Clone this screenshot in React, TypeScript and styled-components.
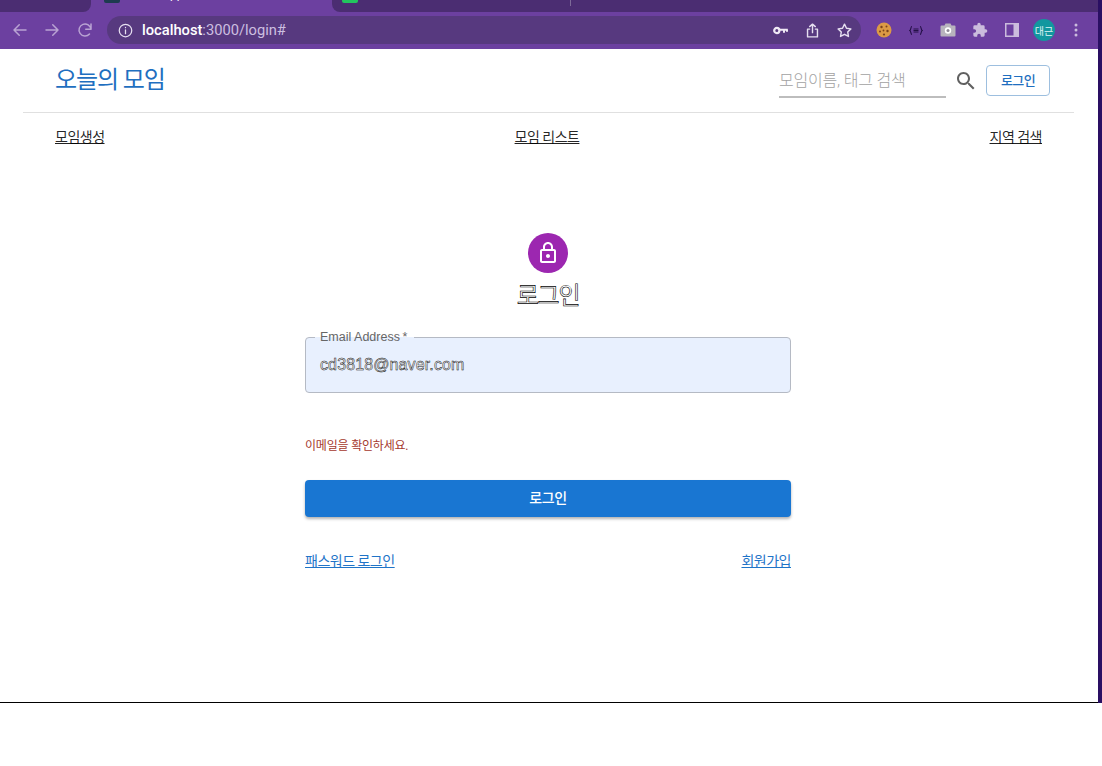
import type { ReactNode } from 'react'
import styled, { createGlobalStyle } from 'styled-components'

const GlobalStyle = createGlobalStyle`
  html, body {
    background: #fff;
    margin: 0;
    padding: 0;
  }
  body {
    font-family: Roboto, "Noto Sans CJK KR", sans-serif;
    height: 766px;
    overflow: hidden;
  }
`

const Screen = styled.div`
  background: #2a0f63;
  display: flex;
  flex-direction: column;
  height: 703px;
  padding-right: 4px;
  width: 1098px;
`

const TabStrip = styled.div`
  background: #6c40a0;
  display: flex;
  flex-shrink: 0;
  height: 12px;
  overflow: hidden;
`

const LeftTab = styled.div`
  background: #4b2d72;
  border-bottom-right-radius: 8px;
  flex-shrink: 0;
  width: 91px;
`

const ActiveTab = styled.div`
  display: flex;
  flex-shrink: 0;
  gap: 8px;
  padding-left: 13px;
  width: 228px;
`

const RightTab = styled.div`
  background: #4b2d72;
  border-bottom-left-radius: 8px;
  display: flex;
  flex: 1;
  padding-left: 10px;
`

const Favicon = styled.div<{ $color: string }>`
  background: ${(p) => p.$color};
  border-radius: 0 0 2px 2px;
  flex-shrink: 0;
  height: 3px;
  width: 16px;
`

const TabTitle = styled.div`
  color: #fff;
  font-family: "Liberation Sans", sans-serif;
  font-size: 12px;
  line-height: 14px;
  margin-top: -13px;
`

const TabDivider = styled.div`
  background: #7d6a98;
  height: 6px;
  margin-left: 212px;
  width: 1px;
`

const Toolbar = styled.div`
  align-items: center;
  background: #6c40a0;
  box-sizing: border-box;
  display: flex;
  flex-shrink: 0;
  height: 37px;
  padding: 0 0 1px 10px;
`

const NavButton = styled.div`
  align-items: center;
  color: #b9a3d3;
  display: flex;
  height: 20px;
  justify-content: center;
  margin-right: 12.33px;
  width: 20px;
`

const Omnibox = styled.div`
  align-items: center;
  background: #57397f;
  border-radius: 14px;
  box-sizing: border-box;
  color: #e6dff0;
  display: flex;
  height: 28px;
  padding: 0 6px 0 11px;
  width: 754px;
`

const Url = styled.div`
  color: #cdbfe0;
  flex: 1;
  font-size: 14.7px;
  margin-left: 9px;

  b {
    color: #fff;
    font-weight: 500;
  }
`

const ToolIcon = styled.div`
  align-items: center;
  display: flex;
  height: 20px;
  justify-content: center;
  margin-left: 12px;
  width: 20px;
`

const ExtIcons = styled.div`
  align-items: center;
  display: flex;
  gap: 12px;
  margin-left: 13px;
`

const ExtSlot = styled.div`
  align-items: center;
  display: flex;
  height: 22px;
  justify-content: center;
  width: 20px;
`

const Avatar = styled.div`
  align-items: center;
  background: #12979f;
  border-radius: 50%;
  color: #dff4f5;
  display: flex;
  flex-shrink: 0;
  font-size: 10px;
  height: 22px;
  justify-content: center;
  width: 22px;
`

const Page = styled.div`
  background: #fff;
  border-bottom: 1px solid #000;
  display: flex;
  flex: 1;
  flex-direction: column;
  padding: 0 24px 0 23px;
`

const Header = styled.header`
  align-items: center;
  border-bottom: 1px solid #e0e0e0;
  display: flex;
  flex-shrink: 0;
  height: 63px;
  justify-content: space-between;
  padding: 0 24px 0 32px;
`

const Brand = styled.h1`
  color: #1f6fc0;
  font-size: 24px;
  font-weight: 400;
  letter-spacing: -1.1px;
  margin: 0 0 6px;
`

const HeaderRight = styled.div`
  align-items: center;
  display: flex;
`

const SearchInput = styled.div`
  border-bottom: 2px solid #bdbdbd;
  color: #a2a2a2;
  font-size: 16px;
  font-weight: 300;
  height: 32px;
  letter-spacing: -0.2px;
  line-height: 33px;
  width: 167px;
`

const SearchButton = styled.div`
  align-items: center;
  color: #616161;
  display: flex;
  justify-content: center;
  margin-left: 8px;
  width: 24px;
`

const OutlineButton = styled.div`
  align-items: center;
  border: 1px solid #9dbfdf;
  border-radius: 4px;
  box-sizing: border-box;
  color: #1f6fc0;
  display: flex;
  font-size: 13px;
  font-weight: 500;
  height: 31px;
  justify-content: center;
  letter-spacing: -0.6px;
  margin-left: 8px;
  padding-bottom: 3px;
  width: 64px;
`

const SubNav = styled.nav`
  display: flex;
  flex-shrink: 0;
  justify-content: space-between;
  padding: 14px 32px 0;
`

const SubNavLink = styled.a`
  color: rgba(0, 0, 0, 0.87);
  font-size: 14px;
  letter-spacing: -0.5px;
  line-height: 20px;
  text-decoration: underline;
`

const Form = styled.main`
  align-items: center;
  display: flex;
  flex-direction: column;
  margin-left: 282px;
  padding-top: 86px;
  width: 486px;
`

const LockBadge = styled.div`
  align-items: center;
  background: #9c27b0;
  border-radius: 50%;
  color: #fff;
  display: flex;
  height: 40px;
  justify-content: center;
  width: 40px;
`

const FormTitle = styled.h2`
  color: #fff;
  font-size: 24px;
  font-weight: 400;
  letter-spacing: -1.2px;
  line-height: 28px;
  margin: 9px 0 0;
  -webkit-text-stroke: 0.6px #000;
`

const Field = styled.div`
  background: #e8f0fe;
  border: 1px solid #b5bac4;
  border-radius: 4px;
  box-sizing: border-box;
  color: #fff;
  font-family: "Liberation Sans", sans-serif;
  font-size: 16px;
  height: 56px;
  letter-spacing: 0.12px;
  line-height: 54px;
  margin-top: 27px;
  padding-left: 14px;
  position: relative;
  -webkit-text-stroke: 0.5px #111;
  width: 100%;
`

const FieldLabel = styled.label`
  background: linear-gradient(#fff 50%, #e8f0fe 50%);
  color: #666;
  font-family: "Liberation Sans", sans-serif;
  font-size: 12.5px;
  left: 9px;
  letter-spacing: 0;
  line-height: 12px;
  padding: 0 7px 0 5px;
  position: absolute;
  top: -7px;
  -webkit-text-stroke: 0;
`

const ErrorText = styled.p`
  align-self: flex-start;
  color: #a5382d;
  font-size: 12px;
  letter-spacing: -0.2px;
  line-height: 16px;
  margin: 45px 0 0;
`

const SubmitButton = styled.button`
  background: #1976d2;
  border: 0;
  border-radius: 4px;
  box-shadow: 0 2px 3px rgba(0, 0, 0, 0.3);
  color: #fff;
  font-family: inherit;
  font-size: 14px;
  font-weight: 500;
  height: 37px;
  letter-spacing: -0.4px;
  margin-top: 26px;
  padding: 0 0 3px;
  width: 100%;
`

const FormLinks = styled.div`
  display: flex;
  justify-content: space-between;
  margin-top: 34px;
  width: 100%;
`

const FormLink = styled.a`
  color: #1f74c8;
  font-size: 14px;
  letter-spacing: -0.5px;
  line-height: 20px;
  text-decoration: underline;
`

function Stroke ({ size = 18, children }: { size?: number; children: ReactNode }) {
  return (
    <svg width={size} height={size} viewBox="0 0 24 24" fill="none" stroke="currentColor" strokeWidth="2" strokeLinecap="round" strokeLinejoin="round">
      {children}
    </svg>
  )
}

function KeyIcon () {
  return (
    <svg width="15" height="9" viewBox="0 0 15 9" fill="none" stroke="#efe9f5">
      <circle cx="3.800" cy="4.500" r="2.600" strokeWidth="2.200" />
      <path d="M6.500 3.800h8.300M11 3.800v3M14 3.800v2" strokeWidth="2" />
    </svg>
  )
}

function Cookie () {
  return (
    <svg width="16" height="16" viewBox="0 0 16 16">
      <circle cx="8" cy="8" r="7.500" fill="#dc9a45" />
      <circle cx="5.500" cy="5" r="1.200" fill="#7a431c" />
      <circle cx="10.500" cy="4.500" r="1" fill="#7a431c" />
      <circle cx="4" cy="9.500" r="1" fill="#7a431c" />
      <circle cx="11.500" cy="9" r="1.200" fill="#7a431c" />
      <circle cx="7.500" cy="8.500" r="0.900" fill="#7a431c" />
      <circle cx="8" cy="12.500" r="1.100" fill="#7a431c" />
    </svg>
  )
}

function Braces () {
  return (
    <svg width="14" height="9" viewBox="0 0 14 9" fill="none" stroke="#241046" strokeWidth="1.100">
      <path d="M3 .5C1.500.5 2.200 4 .7 4.500 2.200 5 1.500 8.500 3 8.500M11 .5c1.500 0 .8 3.500 2.300 4-1.500.5-.8 4-2.300 4M4.500 3h5M4.500 4.500h5M4.500 6h5" />
    </svg>
  )
}

function Camera () {
  return (
    <svg width="16" height="14" viewBox="0 0 16 14">
      <path d="M1.500 2.500h3L5.500.5h5l1 2h3a1 1 0 0 1 1 1v9a1 1 0 0 1-1 1h-13a1 1 0 0 1-1-1v-9a1 1 0 0 1 1-1z" fill="#b8b4bd" />
      <circle cx="8" cy="7.500" r="3.200" fill="#fff" />
      <circle cx="8" cy="7.500" r="1.500" fill="#8f8a96" />
    </svg>
  )
}

function Puzzle () {
  return (
    <svg width="16" height="16" viewBox="0 0 24 24" fill="#cbbcdd">
      <path d="M20.500 11H19V7a2 2 0 0 0-2-2h-4V3.500a2.500 2.500 0 0 0-5 0V5H4a2 2 0 0 0-2 2v3.800h1.500a2.700 2.700 0 0 1 0 5.400H2V20a2 2 0 0 0 2 2h3.800v-1.500a2.700 2.700 0 0 1 5.400 0V22H17a2 2 0 0 0 2-2v-4h1.500a2.500 2.500 0 0 0 0-5z" />
    </svg>
  )
}

function SidePanel () {
  return (
    <svg width="14" height="14" viewBox="0 0 14 14">
      <rect x="0" y="0" width="14" height="14" fill="#cbbcdd" />
      <rect x="1.500" y="1.500" width="7" height="11" fill="#6c40a0" />
    </svg>
  )
}

function Kebab () {
  return (
    <svg width="4" height="14" viewBox="0 0 4 14" fill="#cbbcdd">
      <circle cx="2" cy="2" r="1.500" />
      <circle cx="2" cy="7" r="1.500" />
      <circle cx="2" cy="12" r="1.500" />
    </svg>
  )
}

export default function App () {
  return (
    <>
      <GlobalStyle />
      <Screen>
        <TabStrip>
          <LeftTab />
          <ActiveTab>
            <Favicon $color="#1d3b4f" />
            <TabTitle>React App</TabTitle>
          </ActiveTab>
          <RightTab>
            <Favicon $color="#22c55e" />
            <TabDivider />
          </RightTab>
        </TabStrip>
        <Toolbar>
          <NavButton>
            <Stroke><path d="M20 12H4M11 5l-7 7 7 7" /></Stroke>
          </NavButton>
          <NavButton>
            <Stroke><path d="M4 12h16M13 5l7 7-7 7" /></Stroke>
          </NavButton>
          <NavButton>
            <Stroke><path d="M20 11a8 8 0 1 0-2 6.300M20 4v7h-7" /></Stroke>
          </NavButton>
          <Omnibox>
            <Stroke size={15}><circle cx="12" cy="12" r="10" /><path d="M12 11v6M12 7v.5" /></Stroke>
            <Url><b>localhost</b>:3000/login#</Url>
            <ToolIcon><KeyIcon /></ToolIcon>
            <ToolIcon>
              <Stroke size={17}><path d="M12 15V3M8 6.500 12 3l4 3.500M8 10H5v11h14V10h-3" /></Stroke>
            </ToolIcon>
            <ToolIcon>
              <Stroke size={17}><path d="m12 3 2.800 5.800 6.200.9-4.500 4.400 1.100 6.300L12 17.400 6.400 20.400l1.100-6.300L3 9.700l6.200-.9z" /></Stroke>
            </ToolIcon>
          </Omnibox>
          <ExtIcons>
            <ExtSlot><Cookie /></ExtSlot>
            <ExtSlot><Braces /></ExtSlot>
            <ExtSlot><Camera /></ExtSlot>
            <ExtSlot><Puzzle /></ExtSlot>
            <ExtSlot><SidePanel /></ExtSlot>
            <ExtSlot><Avatar>대근</Avatar></ExtSlot>
            <ExtSlot><Kebab /></ExtSlot>
          </ExtIcons>
        </Toolbar>
        <Page>
          <Header>
            <Brand>오늘의 모임</Brand>
            <HeaderRight>
              <SearchInput>모임이름, 태그 검색</SearchInput>
              <SearchButton>
                <svg width="24" height="24" viewBox="0 0 24 24" fill="currentColor">
                  <path d="M15.500 14h-.79l-.28-.27C15.410 12.590 16 11.110 16 9.500 16 5.910 13.090 3 9.500 3S3 5.910 3 9.500 5.910 16 9.500 16c1.610 0 3.090-.59 4.230-1.570l.27.28v.79l5 4.990L20.490 19l-4.990-5zm-6 0C7.010 14 5 11.990 5 9.500S7.010 5 9.500 5 14 7.010 14 9.500 11.990 14 9.500 14z" />
                </svg>
              </SearchButton>
              <OutlineButton>로그인</OutlineButton>
            </HeaderRight>
          </Header>
          <SubNav>
            <SubNavLink href="#">모임생성</SubNavLink>
            <SubNavLink href="#">모임 리스트</SubNavLink>
            <SubNavLink href="#">지역 검색</SubNavLink>
          </SubNav>
          <Form>
            <LockBadge>
              <svg width="24" height="24" viewBox="0 0 24 24" fill="currentColor">
                <path d="M18 8h-1V6c0-2.760-2.240-5-5-5S7 3.240 7 6v2H6c-1.100 0-2 .9-2 2v10c0 1.100.9 2 2 2h12c1.100 0 2-.9 2-2V10c0-1.100-.9-2-2-2zM9 6c0-1.660 1.340-3 3-3s3 1.340 3 3v2H9V6zm9 14H6V10h12v10zm-6-3c1.100 0 2-.9 2-2s-.9-2-2-2-2 .9-2 2 .9 2 2 2z" />
              </svg>
            </LockBadge>
            <FormTitle>로그인</FormTitle>
            <Field>
              <FieldLabel>Email Address{'\u2009'}*</FieldLabel>
              cd3818@naver.com
            </Field>
            <ErrorText>이메일을 확인하세요.</ErrorText>
            <SubmitButton type="button">로그인</SubmitButton>
            <FormLinks>
              <FormLink href="#">패스워드 로그인</FormLink>
              <FormLink href="#">회원가입</FormLink>
            </FormLinks>
          </Form>
        </Page>
      </Screen>
    </>
  )
}
